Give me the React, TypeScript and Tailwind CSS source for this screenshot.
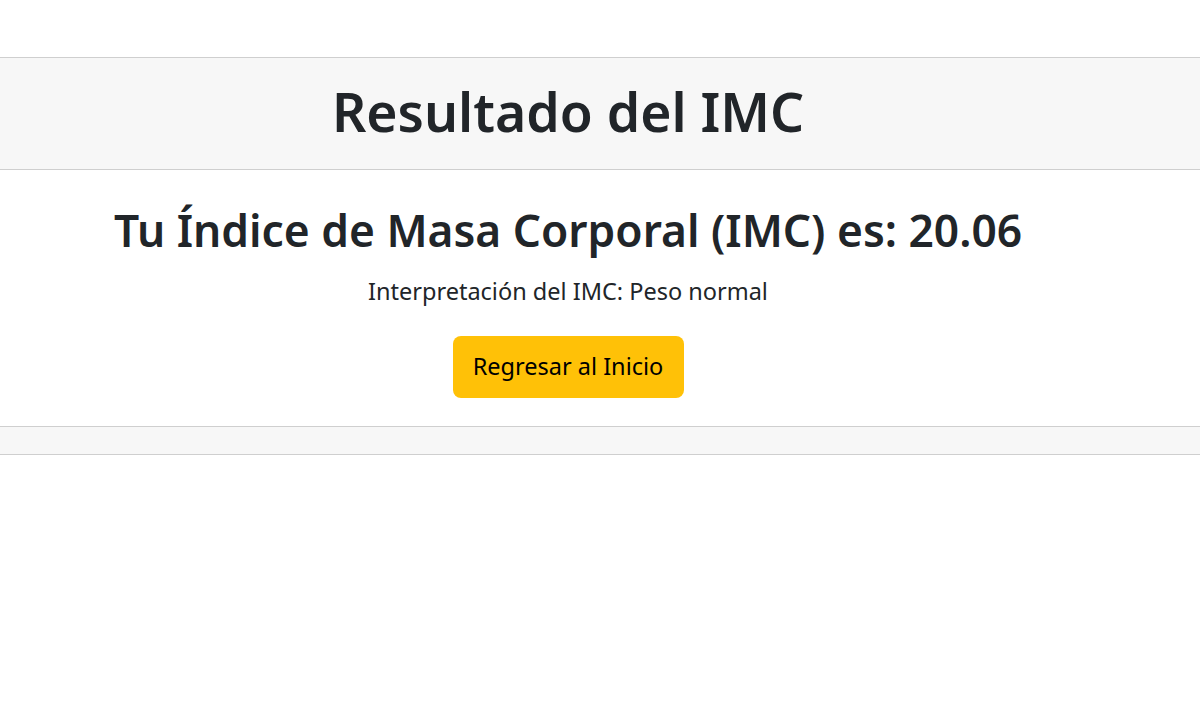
export default function App() {
    return (
        <div className="min-h-[720px] bg-white pt-[57px] text-[#212529]" style={{ fontFamily: '"Noto Sans", "Open Sans", sans-serif' }}>
            <div className="border-y border-[#cfcfcf]">
                {/* header */}
                <div className="h-[112px] bg-[#f7f7f7] border-b border-[#cfcfcf] flex items-center justify-center pr-16 pb-1">
                    <h1 className="text-[53.5px] font-semibold leading-none">Resultado del IMC</h1>
                </div>

                {/* body */}
                <div className="flex flex-col items-center pr-16 pt-[32px] pb-[28px] text-center">
                    <h2 className="text-[44.3px] font-semibold leading-[56px]">Tu Índice de Masa Corporal (IMC) es: 20.06</h2>
                    <p className="mt-[15px] text-[23.5px] leading-[36px]">Interpretación del IMC: Peso normal</p>
                    <button className="mt-[27px] h-[62px] w-[231px] rounded-lg bg-[#ffc107] text-[23.5px] text-black">
                        Regresar al Inicio
                    </button>
                </div>

                {/* footer */}
                <div className="h-[28px] bg-[#f7f7f7] border-t border-[#cfcfcf]"></div>
            </div>
        </div>
    );
}
